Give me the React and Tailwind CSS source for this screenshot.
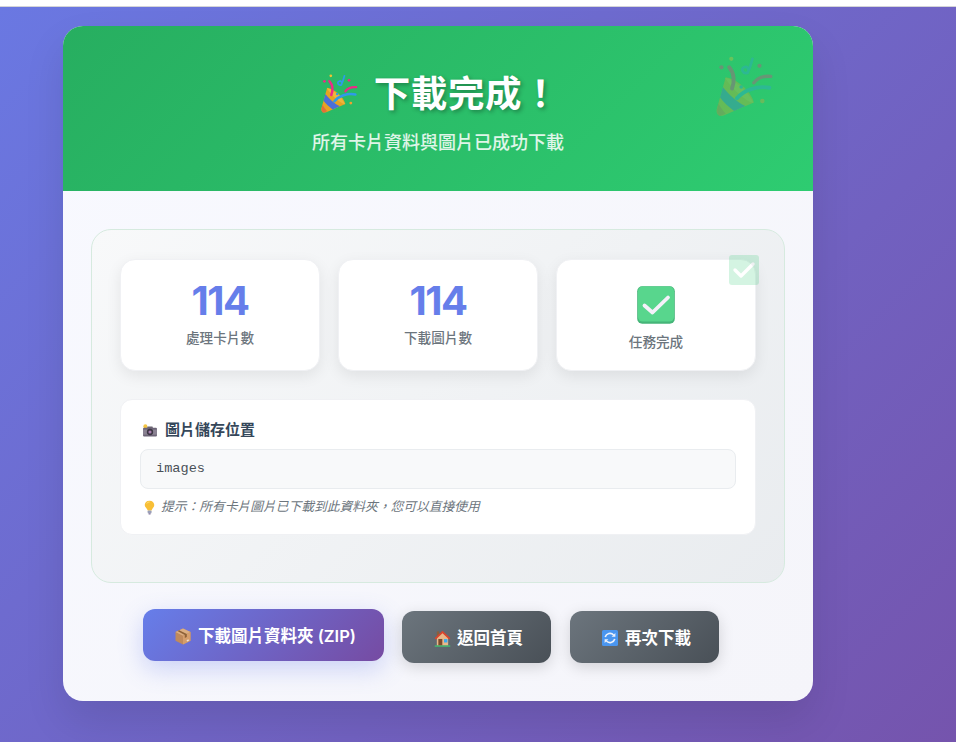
const FONT = '[font-family:Inter,"Noto_Sans_CJK_TC",sans-serif]';

function Popper({ className }) {
  return (
    <svg viewBox="0 0 40 44" className={className} fill="none">
      <path d="M7 15 L0.6 38 C0 42 3 43 6 42 L27 33 C25 25 15 16 7 15 Z" fill="#e5a323" />
      <path d="M5 22 C9 27 15 33 21 35.5 L13 39 C9 36 5.5 33 3 29.5 Z" fill="#4a6fd8" />
      <path d="M1.8 33.5 C3 36 5 38.5 7 41 L3 42.5 C1 42 0.4 40 1 37 Z" fill="#e2703a" />
      <path d="M6.5 15.5 C13 16.5 23 25 26.5 33 C25 34.5 13 26 6.5 15.5 Z" fill="#efb53a" />
      <path d="M9.5 8 C13 12 13.5 18 11.5 23" stroke="#ee2a86" strokeWidth="2.8" strokeLinecap="round" />
      <path d="M15 30 C20 24 29 21 38 22.5" stroke="#2e9be8" strokeWidth="2.8" strokeLinecap="round" />
      <path d="M27 19 C30 15 34 14 39 14.5" stroke="#ee2a86" strokeWidth="2.4" strokeLinecap="round" />
      <path d="M26 2 C25 6 24 9 22.5 12 C19 13 17.5 9 20 8 C22 7 24 9 23 11" stroke="#2e9be8" strokeWidth="1.9" strokeLinecap="round" />
      <circle cx="11" cy="2" r="1.5" fill="#f1c232" />
      <circle cx="4" cy="8" r="1.5" fill="#ee2a86" />
      <circle cx="31" cy="7" r="1.5" fill="#ee2a86" />
      <circle cx="33" cy="32" r="1.6" fill="#f0a030" />
      <circle cx="18" cy="22" r="1.3" fill="#2e9be8" />
    </svg>
  );
}

function CheckBox({ className }) {
  return (
    <svg viewBox="0 0 38 38" className={className}>
      <rect x="0.2" y="0.2" width="37.6" height="37.6" rx="5" fill="#45b578" />
      <rect x="1" y="0.6" width="36" height="35" rx="4.5" fill="#58d68d" />
      <path d="M7.5 19.5 L15.5 26.5 L31 11.5" fill="none" stroke="#f5f1fa" strokeWidth="3.8" strokeLinecap="round" strokeLinejoin="round" />
    </svg>
  );
}

function Camera({ className }) {
  return (
    <svg viewBox="0 0 16 14" className={className}>
      <circle cx="3" cy="2.6" r="2.2" fill="#f5c542" />
      <rect x="5" y="2.6" width="6" height="2.5" rx="0.6" fill="#6b6472" />
      <rect x="0.5" y="4" width="15" height="9.5" rx="1.2" fill="#6c6476" />
      <rect x="0.5" y="6" width="15" height="5.5" fill="#8a8292" />
      <circle cx="8" cy="8.6" r="3.4" fill="#3d3644" />
      <circle cx="8" cy="8.6" r="1.7" fill="#a77fb0" />
    </svg>
  );
}

function Bulb({ className }) {
  return (
    <svg viewBox="0 0 12 16" className={className}>
      <path d="M6 0.6 C9.2 0.6 11.2 2.8 11.2 5.4 C11.2 8 8.8 9 8.2 11.4 L4 11.4 C3.6 9 0.8 8 0.8 5.4 C0.8 2.8 2.8 0.6 6 0.6 Z" fill="#f8bf36" />
      <path d="M3 3.6 C3.8 2.4 5 2 6 2" stroke="#fde68a" strokeWidth="1" fill="none" />
      <rect x="4" y="11.4" width="4.2" height="3" rx="0.7" fill="#9aa0b8" />
      <rect x="4.8" y="14.2" width="2.6" height="1.3" rx="0.6" fill="#7c6f9a" />
    </svg>
  );
}

function Box({ className }) {
  return (
    <svg viewBox="0 0 16 17" className={className}>
      <path d="M8 0.5 L15.5 4 L15.5 12.8 L8 16.5 L0.5 12.8 L0.5 4 Z" fill="#c08a5c" />
      <path d="M8 0.5 L15.5 4 L8 7.8 L0.5 4 Z" fill="#dcae82" />
      <path d="M8 7.8 L15.5 4 L15.5 12.8 L8 16.5 Z" fill="#d69e6c" />
      <path d="M4.2 2.2 L11.8 6 L11.8 9 L9.8 10 L9.8 6.9 L2.4 3.1 Z" fill="#8f6238" />
      <rect x="11.5" y="12" width="2" height="1.5" fill="#f0e4d4" transform="rotate(-25 12 12)" />
    </svg>
  );
}

function House({ className }) {
  return (
    <svg viewBox="0 0 18 18" className={className}>
      <rect x="3" y="1.5" width="2.4" height="5" fill="#8b5e3c" />
      <path d="M3 8 L9 2.5 L15 8 L15 16.5 L3 16.5 Z" fill="#e8b88a" />
      <path d="M0.6 8.8 L9 0.8 L17.4 8.8 L16 10 L9 3.4 L2 10 Z" fill="#d8452e" />
      <rect x="4.6" y="9.5" width="4.2" height="7" fill="#7d4a2c" />
      <rect x="10.6" y="9.6" width="3.6" height="3.6" fill="#3ba9ee" />
      <rect x="0.8" y="16.4" width="16.4" height="1.2" fill="#3bd16f" />
    </svg>
  );
}

function Refresh({ className }) {
  return (
    <svg viewBox="0 0 16 16" className={className}>
      <rect width="16" height="16" rx="1.6" fill="#4a96f0" />
      <path d="M3.2 7 A5 5 0 0 1 11.6 5" fill="none" stroke="#eef2fb" strokeWidth="1.6" />
      <path d="M12.8 9 A5 5 0 0 1 4.4 11" fill="none" stroke="#eef2fb" strokeWidth="1.6" />
      <path d="M9.6 6.8 L13.4 6.8 L13.4 3 Z" fill="#eef2fb" />
      <path d="M6.4 9.2 L2.6 9.2 L2.6 13 Z" fill="#eef2fb" />
    </svg>
  );
}

function Stat({ value, label }) {
  return (
    <div className="flex h-[112px] w-[200px] flex-col items-center rounded-[15px] border border-[#f0f1f4] bg-white pt-[19px] shadow-[0_5px_15px_rgba(0,0,0,0.08)]">
      <div className="text-[40px] leading-[44px] font-bold tracking-[-1.5px] text-[#667eea]">{value}</div>
      <div className="mt-[5px] text-[13.6px] leading-[20px] font-medium text-[#6c757d]">{label}</div>
    </div>
  );
}

export default function App() {
  return (
    <div className={`h-[742px] w-[956px] overflow-hidden bg-white ${FONT}`}>
      <div className="h-[7px] border-b border-[#d4d4d8] bg-white" />
      <div className="h-[735px] bg-[linear-gradient(135deg,#6a78e2_0%,#7554ad_100%)] pt-[19px] pl-[63px]">
        <div className="h-[675px] w-[750px] overflow-hidden rounded-[20px] bg-[linear-gradient(135deg,#f8f9ff,#f5f5fa)] shadow-[0_20px_40px_rgba(0,0,0,0.1)]">
          <header className="relative flex h-[165px] flex-col items-center bg-[linear-gradient(135deg,#27ae60,#2ecc71)] pt-[40px] text-white">
            <h1 className="flex h-[56px] items-center pl-[3px] text-[36.5px] font-bold tracking-[0.6px] [text-shadow:2px_2px_4px_rgba(0,0,0,0.3)]">
              <Popper className="mr-[16px] h-[40px] w-[38px]" />
              <span>下載完成！</span>
            </h1>
            <p className="mt-[8px] text-[18px] leading-[26px] font-medium text-white/85">所有卡片資料與圖片已成功下載</p>
            <Popper className="absolute top-[30px] left-[652px] h-[62px] w-[58px] opacity-30" />
          </header>

          <main className="px-[28px] pt-[38px]">
            <section className="relative h-[354px] rounded-[20px] border border-[#d6eadf] bg-[linear-gradient(135deg,#f8f9fa,#e9ecef)] px-[28px] pt-[29px]">
              <div className="flex gap-[18px]">
                <Stat value="114" label="處理卡片數" />
                <Stat value="114" label="下載圖片數" />
                <div className="flex h-[112px] w-[200px] flex-col items-center rounded-[15px] border border-[#f0f1f4] bg-white pt-[26px] shadow-[0_5px_15px_rgba(0,0,0,0.08)]">
                  <CheckBox className="h-[38px] w-[38px]" />
                  <div className="mt-[8px] text-[13.6px] leading-[20px] font-medium text-[#6c757d]">任務完成</div>
                </div>
              </div>
              <svg viewBox="0 0 30 30" className="absolute top-[25px] left-[637px] h-[30px] w-[30px] opacity-20">
                <rect width="30" height="30" rx="3" fill="#2ecc71" />
                <path d="M6 15 L12 21 L24 9" fill="none" stroke="#fff" strokeWidth="3.4" strokeLinecap="round" strokeLinejoin="round" />
              </svg>

              <div className="mt-[28px] h-[136px] rounded-[12px] border border-[#f0f1f4] bg-white px-[19px] pt-[19px]">
                <div className="flex h-[22px] items-center text-[15px] font-semibold text-[#35475a]">
                  <Camera className="ml-[2px] mr-[7px] h-[13px] w-[16px]" />
                  圖片儲存位置
                </div>
                <div className="mt-[8px] flex h-[40px] items-center rounded-[8px] border border-[#e9ecef] bg-[#f8f9fa] px-[15px] font-['Liberation_Mono',monospace] text-[13.6px] text-[#495057]">
                  images
                </div>
                <div className="mt-[8px] flex h-[20px] items-center text-[12.76px] text-[#6c757d] italic">
                  <Bulb className="ml-[4px] mr-[6px] h-[15px] w-[11px]" />
                  提示：所有卡片圖片已下載到此資料夾，您可以直接使用
                </div>
              </div>
            </section>

            <div className="mt-[26px] flex items-start pl-[52px]">
              <button className="flex h-[52px] w-[241px] items-center justify-center rounded-[12px] bg-[linear-gradient(135deg,#667eea,#764ba2)] pt-[2px] pl-[4px] text-[16.5px] font-semibold text-white shadow-[0_8px_25px_rgba(102,126,234,0.3)]">
                <Box className="mr-[7px] h-[17px] w-[16px]" />
                下載圖片資料夾 (ZIP)
              </button>
              <button className="mt-[2px] ml-[18px] flex h-[52px] w-[149px] items-center justify-center rounded-[12px] bg-[linear-gradient(135deg,#6c757d,#495057)] pt-[2px] pl-[4px] text-[16.5px] font-semibold text-white shadow-[0_4px_15px_rgba(0,0,0,0.15)]">
                <House className="mr-[6px] h-[17px] w-[17px]" />
                返回首頁
              </button>
              <button className="mt-[2px] ml-[19px] flex h-[52px] w-[149px] items-center justify-center rounded-[12px] bg-[linear-gradient(135deg,#6c757d,#495057)] pt-[2px] pl-[4px] text-[16.5px] font-semibold text-white shadow-[0_4px_15px_rgba(0,0,0,0.15)]">
                <Refresh className="mr-[7px] h-[16px] w-[16px]" />
                再次下載
              </button>
            </div>
          </main>
        </div>
      </div>
    </div>
  );
}
